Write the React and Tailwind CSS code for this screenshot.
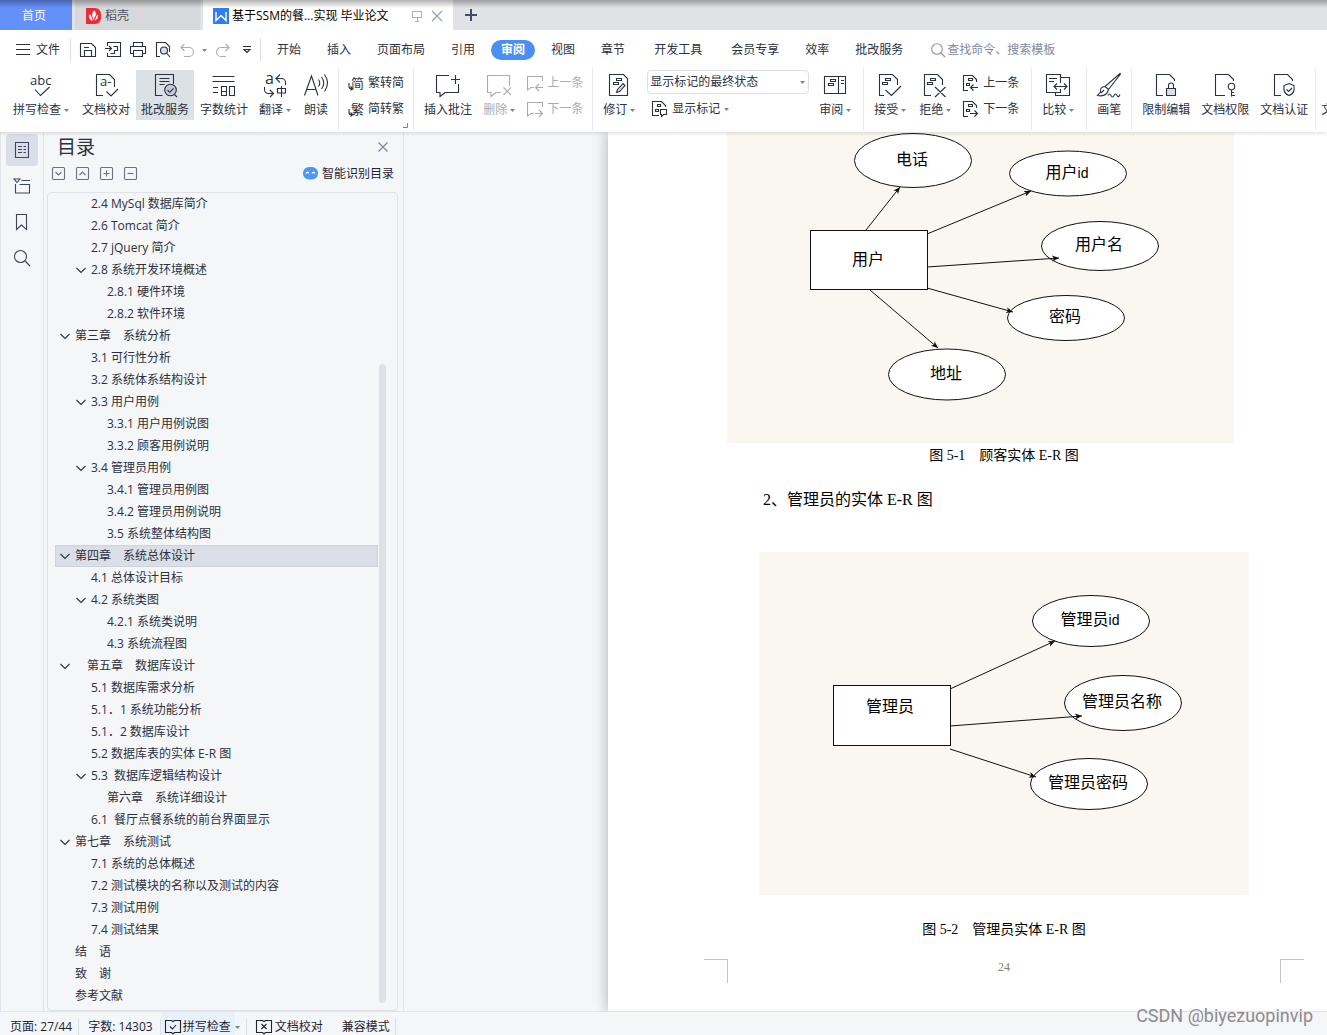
import React, { useState } from 'react';
import { clsx } from 'clsx';

const MENU = [
  { label: '开始' },
  { label: '插入' },
  { label: '页面布局' },
  { label: '引用' },
  { label: '审阅' },
  { label: '视图' },
  { label: '章节' },
  { label: '开发工具', wide: true },
  { label: '会员专享' },
  { label: '效率' },
  { label: '批改服务' },
];

const OUTLINE = [
  { text: '2.4 MySql 数据库简介', level: 1 },
  { text: '2.6 Tomcat 简介', level: 1 },
  { text: '2.7 jQuery 简介', level: 1 },
  { text: '2.8 系统开发环境概述', level: 1, open: true },
  { text: '2.8.1 硬件环境', level: 2 },
  { text: '2.8.2 软件环境', level: 2 },
  { text: '第三章　系统分析', level: 0, open: true },
  { text: '3.1 可行性分析', level: 1 },
  { text: '3.2 系统体系结构设计', level: 1 },
  { text: '3.3 用户用例', level: 1, open: true },
  { text: '3.3.1 用户用例说图', level: 2 },
  { text: '3.3.2 顾客用例说明', level: 2 },
  { text: '3.4 管理员用例', level: 1, open: true },
  { text: '3.4.1 管理员用例图', level: 2 },
  { text: '3.4.2 管理员用例说明', level: 2 },
  { text: '3.5 系统整体结构图', level: 2 },
  { text: '第四章　系统总体设计', level: 0, open: true },
  { text: '4.1 总体设计目标', level: 1 },
  { text: '4.2 系统类图', level: 1, open: true },
  { text: '4.2.1 系统类说明', level: 2 },
  { text: '4.3 系统流程图', level: 2 },
  { text: '　第五章　数据库设计', level: 0, open: true },
  { text: '5.1 数据库需求分析', level: 1 },
  { text: '5.1．1 系统功能分析', level: 1 },
  { text: '5.1．2 数据库设计', level: 1 },
  { text: '5.2 数据库表的实体 E-R 图', level: 1 },
  { text: '5.3  数据库逻辑结构设计', level: 1, open: true },
  { text: '第六章　系统详细设计', level: 2 },
  { text: '6.1  餐厅点餐系统的前台界面显示', level: 1 },
  { text: '第七章　系统测试', level: 0, open: true },
  { text: '7.1 系统的总体概述', level: 1 },
  { text: '7.2 测试模块的名称以及测试的内容', level: 1 },
  { text: '7.3 测试用例', level: 1 },
  { text: '7.4 测试结果', level: 1 },
  { text: '结　语', level: 0 },
  { text: '致　谢', level: 0 },
  { text: '参考文献', level: 0 },
];

const INDENT = ['pl-1', 'pl-5', 'pl-9'];

// stroke icon on a square pixel grid
const Icon = ({ size = 24, className, children }) => (
  <svg
    width={size}
    height={size}
    viewBox={`0 0 ${size} ${size}`}
    fill="none"
    stroke="currentColor"
    strokeWidth="1.1"
    className={clsx('shrink-0 overflow-visible', className)}
    aria-hidden="true"
  >
    {children}
  </svg>
);

const Glyph = ({ x, y, size, children }) => (
  <text x={x} y={y} fontSize={size} fill="currentColor" stroke="none">{children}</text>
);

const Caret = () => (
  <svg width="5" height="3" viewBox="0 0 5 3" className="shrink-0 text-[#7a8499]" aria-hidden="true">
    <path d="M0 0h5L2.5 3z" fill="currentColor" />
  </svg>
);

const SpellIcon = () => (
  <Icon><Glyph x={1} y={12} size={13}>abc</Glyph><path d="M6 16.5l5.5 6 9-8.500" /></Icon>
);
const ProofIcon = () => (
  <Icon>
    <path d="M9 22.5H2.5v-21h13l5 5V14M12.500 18.5l4.500 4.500 7-7" />
    <Glyph x={6} y={13} size={13}>a-</Glyph>
  </Icon>
);
const ReviewServiceIcon = () => (
  <Icon>
    <path d="M9.5 22.5h-7v-21h18V11M6.5 5.5h10M6.5 8.5h10M6.5 11.5h5" />
    <circle cx="17.5" cy="17" r="5.8" fill="#c3cad4" />
    <path d="M14.5 17l2.300 2.300 3.700-4M21.5 21.5l2.500 2.500" />
  </Icon>
);
const CountIcon = () => (
  <Icon><path d="M.5 3.500h22M.5 8.500h22M1 14.500h5M1 19.500h5M9.500 13.500h5v9h-5zM9.500 18.500h5M17.500 13.500h5v9h-5z" /></Icon>
);
const TranslateIcon = () => (
  <Icon>
    <Glyph x={2} y={11} size={16}>a</Glyph>
    <path d="M13.5 5.5h5a4 4 0 0 1 4 4V12M17 1.5l-4 4 4 4M1.500 14v2.500a4 4 0 0 0 4 4H10M7 17l3.500 3.500L7 24" />
    <path d="M14.500 15.500h8v4.500h-8zM18.500 13v11" />
  </Icon>
);
const ReadIcon = () => (
  <Icon><path d="M.5 22.500L7.500 3 14 22.500M3 16.500h9M14.500 6.500q2.500 3.500 0 7M17.500 4q4.500 6 0 12M20.500 1.500q6 8.500 0 17" /></Icon>
);
const ConvertIcon = ({ char }) => (
  <Icon size={16}>
    <Glyph x={3} y={13} size={13}>{char}</Glyph>
    <path d="M1 8v3.500a2 2 0 0 0 2 2h1.500M2.500 11.500l2 2-2 2" />
  </Icon>
);
const AddCommentIcon = () => (
  <Icon><path d="M13 2.500H.5v17H4V23.500l5-4h13.500V11M15 6.500h9M19.500 2v9" /></Icon>
);
const DeleteCommentIcon = () => (
  <Icon><path d="M22.500 13V2.500H.5v17H4V23.500l5-4h4.500M16.500 14.500l7.500 7.500M24 14.500L16.500 22" /></Icon>
);
const CommentStepIcon = ({ next }) => (
  <Icon size={16}>
    <path d="M15.500 6V1.500H.5V15l3.500-2.500h3" />
    {next ? <path d="M8 12.500h7.500M12 9l3.500 3.500L12 16" /> : <path d="M16 12.500H8.500M12 9l-3.500 3.500L12 16" />}
  </Icon>
);
const ReviseIcon = () => (
  <Icon>
    <path d="M2.500 1.500h14l4 4v17h-18z" />
    <path d="M9.500 5.500h5v2h-5zM6.500 9.500h5v2h-5z" />
    <path d="M9.500 19.500l1-3 5.500-6 2 2-5.500 6z" fill="#d9dee7" />
  </Icon>
);
const ShowMarkIcon = () => (
  <Icon size={16}>
    <path d="M7 14.500H.5V.5h9l4 4V6M5.500 3.500h3v2h-3zM3.500 8.500h3v2h-3zM8.500 8.500h6v5h-3l-2 2v-2h-1z" />
  </Icon>
);
const PaneIcon = () => (
  <Icon><path d="M1.500 3.500h21v17h-21zM15.500 3.500v17M18 7.500h3M18 10.500h3M7.500 6.500h5v2h-5zM5.500 10.500h5v2h-5z" /></Icon>
);
const AcceptIcon = () => (
  <Icon><path d="M6 22.500H1.500v-21h13l5 5V12M7.500 17l6 5.500 9.500-9.500M7.500 5.500h5v2h-5zM4.500 9.500h5v2h-5z" /></Icon>
);
const RejectIcon = () => (
  <Icon><path d="M8 22.500H1.500v-21h13l5 5V12M12 14l10.500 10M22.500 14L12 24M7.500 5.500h5v2h-5zM4.500 9.500h5v2h-5z" /></Icon>
);
const ChangeStepIcon = ({ next }) => (
  <Icon size={16}>
    <path d="M5 15.500H.5V.5h9l4 4V7M5.500 3.500h4v2h-4zM3.500 8.500h3v2h-3z" />
    {next ? <path d="M7 12.500h7.500M11.500 9.500l3 3-3 3" /> : <path d="M15 12.500H7.500M10.500 9.500l-3 3 3 3" />}
  </Icon>
);
const CompareIcon = () => (
  <Icon>
    <path d="M14.500 10V1.500H.5v18h14V16M14.500 4.500h9v18h-14v-3M3 5.500h8M3 8.500h5M8 13.500h13M11 10.500l-3 3 3 3M18 10.500l3 3-3 3" />
  </Icon>
);
const BrushIcon = () => (
  <Icon>
    <path d="M23 .5L8 13.500l3.500 3L23.500 1zM8 13.500c-4 0-5 3-4.500 5.500L.5 22.500c5 1 9.500 0 11-6M4 20l3-3M11 22.500q1.500-3 3 0t3 0 3 0 3-1" />
  </Icon>
);
const LockIcon = () => (
  <Icon>
    <path d="M9 22.500H2.500v-21h13l5 5V8" />
    <path d="M12.500 15.500h9v7h-9z" fill="#d9dee7" />
    <path d="M14.500 15.500V12.500a2.500 2.500 0 0 1 5 0v3" />
  </Icon>
);
const KeyIcon = () => (
  <Icon>
    <path d="M12 22.500H2.500v-21h13l5 5V8" />
    <circle cx="18.500" cy="13.500" r="3.200" />
    <path d="M18.500 17v6.500M18.500 19.500H21M18.500 22.500h3.500" />
  </Icon>
);
const ShieldIcon = () => (
  <Icon>
    <path d="M9 22.500H2.500v-21h13l5 5V8" />
    <path d="M17 10.500l5 2v5q-1 3.500-5 5-4-1.500-5-5v-5zM14.500 16.500l2 2 3.500-3.500" />
  </Icon>
);

// tall ribbon button, icon over label
const Tool = ({ icon, label, caret, active, disabled }) => (
  <button
    disabled={disabled}
    className={clsx(
      'flex shrink-0 flex-col items-center gap-[5px] pt-[3px] pb-[2px] pl-[5px]',
      caret ? 'pr-[7px]' : 'pr-[5px]',
      active && 'bg-[#dce1e6]',
      disabled && 'text-[#a9acb3]'
    )}
  >
    {icon}
    <span className="flex items-center gap-[3px] whitespace-nowrap">
      {label}
      {caret && <Caret />}
    </span>
  </button>
);

const SmallTool = ({ icon, label, caret, disabled }) => (
  <button
    disabled={disabled}
    className={clsx('flex h-6 items-center gap-1 whitespace-nowrap pt-[2px]', disabled && 'text-[#a9acb3]')}
  >
    {icon}
    {label}
    {caret && <Caret />}
  </button>
);

const Group = ({ className, children }) => (
  <div className={clsx('relative flex shrink-0 items-start gap-px border-r border-[#e8eaee] pt-[2px]', className)}>
    {children}
  </div>
);

const Stack = ({ className, children }) => (
  <div className={clsx('flex flex-col gap-[2px]', className)}>{children}</div>
);

const TabStrip = () => (
  <div className="relative flex h-[30px] items-stretch bg-[#e1e2e6]">
    <button className="w-[72px] bg-[#6490f9] pt-[2px] pr-1 text-white">首页</button>
    <button className="ml-[3px] flex w-32 items-center gap-1 border-r-[3px] border-[#e1e2e6] bg-[#d7d8dc] pt-[2px] pl-[11px] text-[#4b5160]">
      <svg width="15" height="16" viewBox="0 0 15 16" aria-hidden="true">
        <path d="M0 0h9a6 6 0 0 1 6 6v4a6 6 0 0 1-6 6H0z" fill="#ee2b34" />
        <path d="M8 2c3 2 3 6 0 11-3-4-3-7 0-11zM3 6c2 0 4 3 4 7-3 0-5-3-4-7zM12 6c-2 1-3.500 3-4 7 3-1 5-3 4-7z" fill="#fff" stroke="#ee2b34" strokeWidth=".7" />
      </svg>
      稻壳
    </button>
    <div className="flex w-[250px] items-center bg-white px-[10px] pt-[2px] text-black">
      <svg width="16" height="16" viewBox="0 0 16 16" aria-hidden="true">
        <path d="M0 0h16v16H0z" fill="#2f7df0" />
        <path d="M3 4v8.500l5-5 5 5V4" fill="none" stroke="#fff" strokeWidth="1.400" />
      </svg>
      <span className="ml-[3px] flex-1 truncate">基于SSM的餐...实现 毕业论文</span>
      <button aria-label="窗口" className="text-[#a8b2c8]">
        <Icon size={12}><path d="M1.500 1.500h9v6h-9zM6.500 7.500v4M3.500 11.500h5" /></Icon>
      </button>
      <button aria-label="关闭标签" className="ml-2 text-[#8e9ab8]">
        <Icon size={12}><path d="M1 1l10 10M11 1L1 11" /></Icon>
      </button>
    </div>
    <button aria-label="新建标签" className="px-3 text-[#414c66]">
      <Icon size={12}><path d="M6 0v12M0 6h12" strokeWidth="2" /></Icon>
    </button>
    <div className="pointer-events-none absolute inset-x-0 top-0 h-2 bg-linear-to-b from-black/30 to-transparent" />
  </div>
);

const MenuBar = ({ active, onSelect }) => (
  <nav className="flex h-[38px] items-center pt-[2px]">
    <button className="flex items-center gap-[6px] pr-[10px] pl-4">
      <Icon size={14}><path d="M0 1.500h14M0 6.500h14M0 11.500h14" /></Icon>
      文件
    </button>
    <div className="flex h-6 items-center gap-[9px] border-x border-[#dcdfe5] pr-[9px] pl-[9px]">
      <button aria-label="保存">
        <Icon size={16}><path d="M.5 1.500h11l4 4v9H.5zM4.500 14.500v-6h7v6M4 5.500h5" /></Icon>
      </button>
      <button aria-label="输出为PDF">
        <Icon size={16}><path d="M2.500 4V.5h13v14h-13V11M0 6.500h6.500M4 4l2.500 2.500L4 9M8.500 4.500h4v4h-3v3h-4" /></Icon>
      </button>
      <button aria-label="打印">
        <Icon size={16}><path d="M3.500 4.500v-4h9v4M3.500 11.500h-3v-7h15v7h-3M3.500 8.500h9v6h-9z" /></Icon>
      </button>
      <button aria-label="打印预览">
        <Icon size={16}>
          <path d="M5 14.500H1.500V.5h9l4 4V10" />
          <circle cx="9" cy="8.500" r="3.500" fill="#d9dee7" />
          <path d="M11.500 11l3.500 4" />
        </Icon>
      </button>
      <button aria-label="撤销" className="flex items-center gap-2 text-[#a9acb3]">
        <Icon size={14}><path d="M4.500 1L1 4.500 4.500 8M1 4.500h8a4.300 4.300 0 0 1 0 9H4" /></Icon>
        <Caret />
      </button>
      <button aria-label="重做" className="text-[#a9acb3]">
        <Icon size={14}><path d="M9.500 1L13 4.500 9.500 8M13 4.500H5a4.300 4.300 0 0 0 0 9h5" /></Icon>
      </button>
      <button aria-label="自定义" className="ml-1">
        <Icon size={8}><path d="M0 .5h8M1 3.500l3 3 3-3z" /></Icon>
      </button>
    </div>
    <div className="flex items-center pl-[3px]">
      {MENU.map(item => (
        <button
          key={item.label}
          onClick={() => onSelect(item.label)}
          className={clsx('flex justify-center whitespace-nowrap', item.wide ? 'px-[6px]' : 'px-[3px]')}
        >
          <span className={clsx('rounded-full px-[10px] leading-5', active === item.label && 'bg-[#4a90f2] font-bold text-white')}>
            {item.label}
          </span>
        </button>
      ))}
    </div>
    <label className="ml-[15px] flex flex-1 items-center gap-[2px] text-[#8a94a8]">
      <Icon size={14}><circle cx="6" cy="6" r="5.3" /><path d="M10 10l4 4" /></Icon>
      <input aria-label="查找" placeholder="查找命令、搜索模板" className="min-w-0 flex-1 outline-none placeholder:text-[#7f899e]" />
    </label>
  </nav>
);

const Ribbon = () => (
  <div className="flex h-16 overflow-hidden pb-[2px] pl-[3px]">
    <Group className="px-[5px]">
      <Tool icon={<SpellIcon />} label="拼写检查" caret />
      <Tool icon={<ProofIcon />} label="文档校对" />
      <Tool icon={<ReviewServiceIcon />} label="批改服务" active />
      <Tool icon={<CountIcon />} label="字数统计" />
      <Tool icon={<TranslateIcon />} label="翻译" caret />
      <Tool icon={<ReadIcon />} label="朗读" />
    </Group>
    <Group className="px-[9px]">
      <Stack>
        <SmallTool icon={<ConvertIcon char="简" />} label="繁转简" />
        <SmallTool icon={<ConvertIcon char="繁" />} label="简转繁" />
      </Stack>
      <svg width="5" height="5" viewBox="0 0 5 5" className="absolute right-[5px] bottom-[2px] text-[#7a8499]" aria-hidden="true">
        <path d="M4.500 0v4.500H0" fill="none" stroke="currentColor" />
      </svg>
    </Group>
    <Group className="pr-[9px] pl-[5px]">
      <Tool icon={<AddCommentIcon />} label="插入批注" />
      <Tool icon={<DeleteCommentIcon />} label="删除" caret disabled />
      <Stack className="pl-1">
        <SmallTool icon={<CommentStepIcon />} label="上一条" disabled />
        <SmallTool icon={<CommentStepIcon next />} label="下一条" disabled />
      </Stack>
    </Group>
    <Group className="px-[5px]">
      <Tool icon={<ReviseIcon />} label="修订" caret />
      <Stack className="px-1">
        <div className="relative flex items-center">
          <select aria-label="标记显示方式" className="h-6 w-[162px] appearance-none rounded-sm border border-[#dcdfe5] bg-white pl-[2px]">
            <option>显示标记的最终状态</option>
          </select>
          <span className="pointer-events-none absolute right-1"><Caret /></span>
        </div>
        <div className="pl-[5px]">
          <SmallTool icon={<ShowMarkIcon />} label="显示标记" caret />
        </div>
      </Stack>
      <Tool icon={<PaneIcon />} label="审阅" caret />
    </Group>
    <Group className="pr-3 pl-[5px]">
      <Tool icon={<AcceptIcon />} label="接受" caret />
      <Tool icon={<RejectIcon />} label="拒绝" caret />
      <Stack className="pl-1">
        <SmallTool icon={<ChangeStepIcon />} label="上一条" />
        <SmallTool icon={<ChangeStepIcon next />} label="下一条" />
      </Stack>
    </Group>
    <Group className="px-[5px]">
      <Tool icon={<CompareIcon />} label="比较" caret />
    </Group>
    <Group className="px-[5px]">
      <Tool icon={<BrushIcon />} label="画笔" />
    </Group>
    <Group className="pr-[2px] pl-[5px]">
      <Tool icon={<LockIcon />} label="限制编辑" />
      <Tool icon={<KeyIcon />} label="文档权限" />
      <Tool icon={<ShieldIcon />} label="文档认证" />
    </Group>
    <div className="pt-[2px]">
      <Tool icon={<span className="h-6" />} label="文" />
    </div>
  </div>
);

const Rail = () => (
  <aside className="flex w-11 shrink-0 flex-col gap-1 border-x border-[#e1e4ea] pt-[2px] pl-[5px] text-[#3c4663]">
    <button aria-label="目录" className="flex size-8 items-center justify-center rounded-sm bg-[#d9dee7]">
      <Icon size={16}><path d="M1.500.5h13v15h-13zM4 4.500h4M4 7.500h4M4 10.500h4M9.500 4.500H12M9.500 7.500H12M9.500 10.500H12" /></Icon>
    </button>
    <button aria-label="章节导航" className="flex size-8 items-center justify-center">
      <Icon size={16}><path d="M0 1h6L3 4.500zM7.500 2.500H16M1.500 6v9h14V6.500h-10" /></Icon>
    </button>
    <button aria-label="书签" className="flex size-8 items-center justify-center">
      <Icon size={16}><path d="M2.500.5h10v15l-5-4.500-5 4.500z" /></Icon>
    </button>
    <button aria-label="查找和替换" className="flex size-8 items-center justify-center">
      <Icon size={16}><circle cx="6.500" cy="6.500" r="6" /><path d="M11 11l5 5" /></Icon>
    </button>
  </aside>
);

const BoxButton = ({ label, d }) => (
  <button aria-label={label} className="text-[#6b7382]">
    <Icon size={13}>
      <rect x=".5" y=".5" width="12" height="12" rx="1" />
      <path d={d} />
    </Icon>
  </button>
);

const Outline = () => {
  const [selected, setSelected] = useState(16);

  return (
    <section className="flex w-[360px] shrink-0 flex-col border-r border-[#e1e4ea] pr-[5px] pl-[3px]">
      <div className="flex items-center justify-between pt-[3px] pr-[10px] pl-[10px]">
        <h2 className="text-[19px] leading-6">目录</h2>
        <button aria-label="关闭" className="text-[#7a8499]">
          <Icon size={10}><path d="M.5.5l9 9M9.500.5l-9 9" /></Icon>
        </button>
      </div>
      <div className="flex h-[33px] items-center gap-[11px] pt-[2px] pr-1 pb-[6px] pl-[5px]">
        <BoxButton label="展开" d="M3.500 5l3 3 3-3" />
        <BoxButton label="收起" d="M3.500 8l3-3 3 3" />
        <BoxButton label="提升" d="M3.500 6.500h6M6.500 3.500v6" />
        <BoxButton label="降低" d="M3.500 6.500h6" />
        <button className="ml-auto flex items-center gap-1 text-[#1f2433]">
          <svg width="15" height="13" viewBox="0 0 15 13" aria-hidden="true">
            <rect x="0" y="0" width="15" height="12.500" rx="6" fill="#4a97f5" />
            <path d="M3 6.500q1.500-2.500 3 0M9 6.500q1.500-2.500 3 0" fill="none" stroke="#fff" strokeWidth="1.300" />
          </svg>
          智能识别目录
        </button>
      </div>
      <div className="flex min-h-0 flex-1 rounded-sm border border-[#dfe2e8] pr-[11px] pl-[7px]">
        <ul className="min-w-0 flex-1 overflow-hidden">
          {OUTLINE.map((item, i) => (
            <li key={item.text}>
              <button
                onClick={() => setSelected(i)}
                className={clsx(
                  'flex h-[22px] w-full items-center whitespace-pre text-left',
                  INDENT[item.level],
                  selected === i && 'bg-[#d9dee7] outline -outline-offset-1 outline-[#cdd3de]'
                )}
              >
                <span className="flex w-4 shrink-0 pl-px">
                  {item.open && <Icon size={10}><path d="M.5 3L5 7.500 9.500 3" /></Icon>}
                </span>
                {item.text}
              </button>
            </li>
          ))}
        </ul>
        <div className="flex w-2 pt-[171px] pb-[7px] pl-px">
          <div className="flex-1 rounded-full bg-[#dee1e5]" />
        </div>
      </div>
    </section>
  );
};

const ErDiagram = ({ id, width, height, entity, attributes, arrows }) => (
  <svg
    width={width}
    height={height}
    viewBox={`0 0 ${width} ${height}`}
    className="block bg-[#f9f7f0]"
    fill="#fff"
    stroke="#111"
    strokeWidth="1"
    role="img"
  >
    <defs>
      <marker id={id} viewBox="0 0 8 8" refX="7" refY="4" markerWidth="8" markerHeight="8" orient="auto" markerUnits="userSpaceOnUse">
        <path d="M0 1l7 3-7 3 2-3z" fill="#111" stroke="none" />
      </marker>
    </defs>
    <rect x={entity.x} y={entity.y} width={entity.w} height={entity.h} />
    {attributes.map(a => <ellipse key={a.text} cx={a.x} cy={a.y} rx="58.5" ry={a.ry} />)}
    {arrows.map(d => <path key={d} d={d} markerEnd={`url(#${id})`} />)}
    <g fill="#000" stroke="none" fontSize="16" textAnchor="middle" className="font-['Liberation_Sans','Noto_Sans_CJK_SC',sans-serif]">
      <text x={entity.tx} y={entity.ty}>{entity.text}</text>
      {attributes.map(a => (
        <text key={a.text} x={a.x - 1} y={a.y + 4}>
          {a.text}
          {a.latin && <tspan fontSize="14">{a.latin}</tspan>}
        </text>
      ))}
    </g>
  </svg>
);

const Page = () => (
  <article className="flex w-[792px] shrink-0 flex-col bg-white px-[119px] font-['Liberation_Serif','Noto_Sans_CJK_SC',serif] text-sm text-black shadow-[0_0_14px_rgba(0,0,0,0.3)]">
    <ErDiagram
      id="arrow-user"
      width={507}
      height={311}
      entity={{ x: 83.5, y: 98.5, w: 117, h: 59, tx: 141, ty: 133, text: '用户' }}
      attributes={[
        { x: 186, y: 28.5, ry: 27, text: '电话' },
        { x: 341, y: 41.5, ry: 22.5, text: '用户', latin: 'id' },
        { x: 373, y: 114, ry: 24.5, text: '用户名' },
        { x: 339, y: 186, ry: 22.5, text: '密码' },
        { x: 220, y: 242.5, ry: 25.5, text: '地址' },
      ]}
      arrows={['M139 98L173 55', 'M200 102L304 59', 'M200 135L332 126', 'M200 156L286 180', 'M143 158L211 216']}
    />
    <p className="pt-[3px] text-center leading-5">图 5-1　顾客实体 E-R 图</p>
    <p className="pt-[22px] pl-9 text-base leading-6">2、管理员的实体 E-R 图</p>
    <div className="flex justify-center pt-10">
      <ErDiagram
        id="arrow-admin"
        width={490}
        height={343}
        entity={{ x: 74.5, y: 133.5, w: 117, h: 60, tx: 131, ty: 160, text: '管理员' }}
        attributes={[
          { x: 332, y: 69, ry: 25.5, text: '管理员', latin: 'id' },
          { x: 364, y: 151, ry: 27.5, text: '管理员名称' },
          { x: 330, y: 232, ry: 25.5, text: '管理员密码' },
        ]}
        arrows={['M191 137L296 89', 'M191 174L323 164', 'M191 197L277 225']}
      />
    </div>
    <p className="pt-[25px] text-center leading-5">图 5-2　管理员实体 E-R 图</p>
    {/* bottom margin crop marks and page number */}
    <div className="-mx-[23px] flex items-start justify-between pt-[19px]">
      <span className="size-6 border-t border-r border-[#c4c4c4]" />
      <span className="text-xs leading-4 text-[#808080]">24</span>
      <span className="size-6 border-t border-l border-[#c4c4c4]" />
    </div>
  </article>
);

const BookIcon = ({ d }) => (
  <Icon size={16}><path d="M8 2.500L6.500 1.500H.5v12h6L8 15l1.500-1.500h6v-12h-6z" /><path d={d} /></Icon>
);

const StatusBar = () => (
  <footer className="flex h-6 shrink-0 items-end border-t border-[#dfe2e8] pl-[10px] text-[#1f2433]">
    <span className="border-r border-[#dcdfe5] pr-[6px]">页面: 27/44</span>
    <span className="border-r border-[#dcdfe5] pr-[7px] pl-[9px]">字数: 14303</span>
    <button className="flex h-full items-end gap-[2px] bg-[#e8f1fc] px-1">
      <BookIcon d="M5 7.500l2.500 2.500L11 6" />
      拼写检查
    </button>
    <button aria-label="拼写选项" className="flex h-4 items-center border-r border-[#dcdfe5] pr-[6px]"><Caret /></button>
    <button className="flex items-center gap-[3px] pl-[9px]">
      <BookIcon d="M5.500 5l5 5M10.500 5l-5 5" />
      文档校对
    </button>
    <span className="border-r border-[#dcdfe5] pr-[5px] pl-[19px]">兼容模式</span>
  </footer>
);

const App = () => {
  const [menu, setMenu] = useState('审阅');

  return (
    <div className="relative flex h-screen flex-col overflow-hidden bg-[#f5f6f8] font-['Open_Sans','Noto_Sans_CJK_SC',sans-serif] text-xs leading-4 text-[#2a3142]">
      <header className="relative z-10 shrink-0 bg-white shadow-[0_1px_4px_rgba(0,0,0,0.15)]">
        <TabStrip />
        <MenuBar active={menu} onSelect={setMenu} />
        <Ribbon />
      </header>
      <div className="flex min-h-0 flex-1">
        <Rail />
        <Outline />
        <main className="flex min-w-0 flex-1 overflow-hidden pl-[204px]">
          <Page />
        </main>
      </div>
      <StatusBar />
      <div className="pointer-events-none absolute right-[14px] bottom-[7px] z-20 font-['Roboto',sans-serif] text-lg leading-6 text-[#8c8c8c]">
        CSDN @biyezuopinvip
      </div>
    </div>
  );
};

export default App;
